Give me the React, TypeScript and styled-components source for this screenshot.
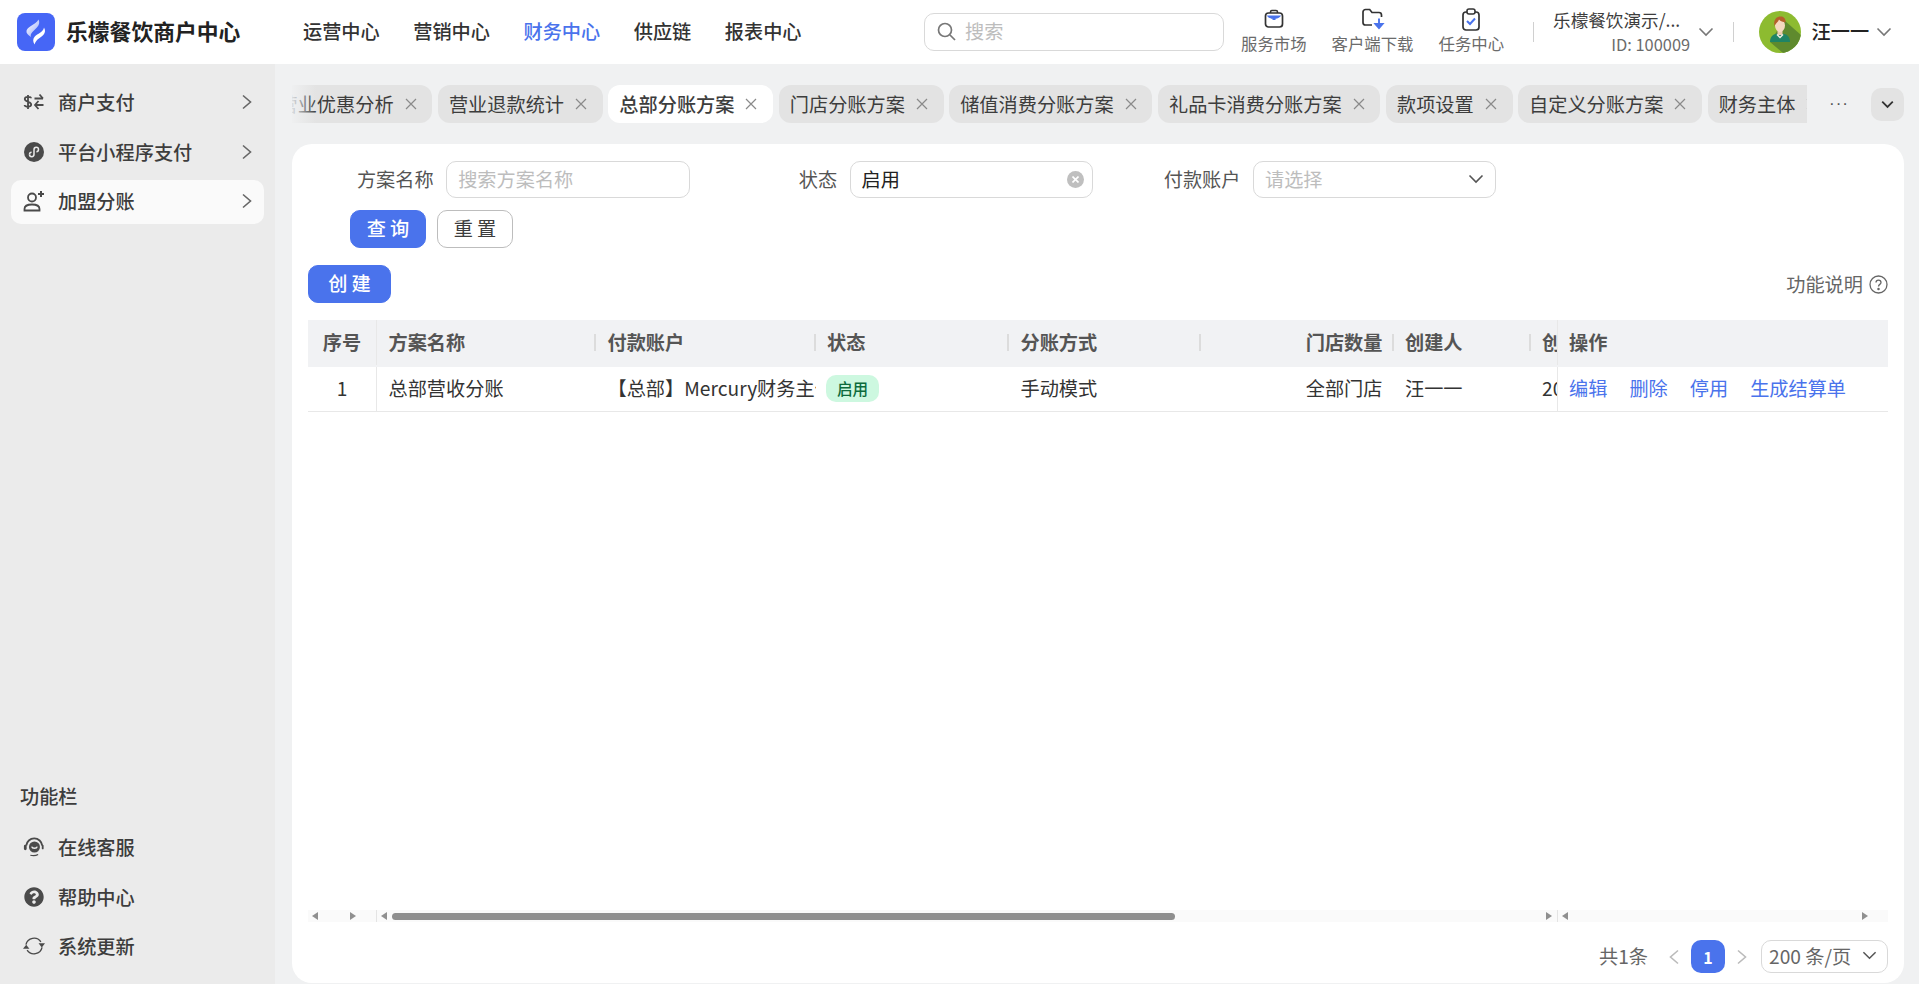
import styled, { createGlobalStyle } from 'styled-components';
import { FaQuestionCircle } from 'react-icons/fa';

const GlobalStyle = createGlobalStyle`
  html, body {
    margin: 0;
    padding: 0;
    height: 100%;
    overflow: hidden;
    background: #f0f1f2;
    font-family: "Noto Sans CJK SC", "Noto Sans", sans-serif;
    color: #3d3d3d;
  }
  * { box-sizing: border-box; }
`;

const Page = styled.div`
  width: 1919px;
  height: 984px;
  display: flex;
  flex-direction: column;
  overflow: hidden;
`;

/* header */
const Header = styled.header`
  height: 64px;
  flex: none;
  background: #fff;
  display: flex;
  align-items: center;
  padding-left: 17px;
`;

const Brand = styled.div`
  width: 286px;
  display: flex;
  align-items: center;
  gap: 11px;
`;

const BrandName = styled.span`
  font-size: 21.8px;
  font-weight: 700;
  color: #222;
  white-space: nowrap;
  padding-bottom: 3px;
`;

const Nav = styled.nav`
  display: flex;
  gap: 33.5px;
  width: 621px;
  padding-bottom: 3px;
`;

const NavItem = styled.span<{ $active?: boolean }>`
  font-size: 19.2px;
  font-weight: 500;
  white-space: nowrap;
  color: ${(p) => (p.$active ? '#4a73ec' : '#333')};
`;

const SearchBox = styled.div`
  width: 300px;
  height: 38px;
  border: 1px solid #d9d9d9;
  border-radius: 10px;
  display: flex;
  align-items: center;
  gap: 9px;
  padding: 0 0 2px 12px;
  font-size: 19.2px;
  color: #bdbdbd;
`;

const Shortcuts = styled.div`
  display: flex;
  margin-left: 17px;
  gap: 25px;
  margin-bottom: 3px;
`;

const Shortcut = styled.div`
  display: flex;
  flex-direction: column;
  align-items: center;
  font-size: 16.4px;
  line-height: 22px;
  color: #6b6b6b;
  white-space: nowrap;
  gap: 1px;
`;

const ShortcutIcon = styled.span`
  height: 23px;
  display: flex;
  align-items: center;
  justify-content: center;
`;

const HeaderDivider = styled.i<{ $gap: number }>`
  width: 1px;
  height: 20px;
  margin-left: ${(p) => p.$gap}px;
  background: #d0d0d0;
  flex: none;
`;

const Company = styled.div`
  margin-left: 19px;
  width: 137px;
  display: flex;
  flex-direction: column;
  align-items: flex-start;
  color: #3d3d3d;
  white-space: nowrap;
`;

const CompanyName = styled.span`
  font-size: 17.6px;
  line-height: 24px;
`;

const CompanyId = styled.span`
  align-self: flex-end;
  font-size: 16.4px;
  line-height: 24px;
  color: #6b6b6b;
`;

const CompanyChevron = styled.span`
  display: flex;
  margin-left: 7.5px;
`;

const AvatarSlot = styled.span`
  display: flex;
  margin-left: 25px;
`;

const UserName = styled.span`
  font-size: 19.2px;
  font-weight: 500;
  color: #222;
  margin-left: 11px;
  width: 58px;
  white-space: nowrap;
  padding-bottom: 3px;
`;

const UserChevron = styled.span`
  display: flex;
  margin-left: 6px;
`;

/* body */
const Body = styled.div`
  flex: 1;
  display: flex;
  min-height: 0;
`;

const Sidebar = styled.aside`
  width: 275px;
  flex: none;
  background: #ebebeb;
  display: flex;
  flex-direction: column;
  justify-content: space-between;
  padding: 17px 11px 15px;
`;

const MenuGroup = styled.div`
  display: flex;
  flex-direction: column;
  gap: 5.5px;
`;

const MenuItem = styled.div<{ $active?: boolean }>`
  height: 44px;
  display: flex;
  align-items: center;
  gap: 13px;
  padding: 0 9.5px 2px 12px;
  border-radius: 10px;
  font-size: 19.2px;
  font-weight: 500;
  color: #3d3d3d;
  background: ${(p) => (p.$active ? '#fafafa' : 'transparent')};
`;

const MenuLabel = styled.span`
  flex: 1;
  white-space: nowrap;
`;

const SectionTitle = styled.div`
  font-size: 19.2px;
  font-weight: 500;
  padding-left: 9px;
  margin-bottom: 16px;
  color: #3d3d3d;
`;

const IconSlot = styled.span`
  width: 22px;
  height: 22px;
  flex: none;
  display: flex;
  align-items: center;
  justify-content: center;
`;

const Main = styled.main`
  flex: 1;
  min-width: 0;
  display: flex;
  flex-direction: column;
  padding: 21px 15px 1px 17px;
`;

/* tabs */
const TabBar = styled.div`
  height: 38px;
  flex: none;
  display: flex;
  align-items: center;
  margin-bottom: 21px;
`;

const TabViewport = styled.div`
  position: relative;
  flex: 1;
  min-width: 0;
  overflow: hidden;
  height: 38px;

  &::before {
    content: '';
    position: absolute;
    left: 0;
    top: 0;
    bottom: 0;
    width: 24px;
    background: linear-gradient(to right, rgba(240, 241, 242, 0.9), rgba(240, 241, 242, 0));
  }
`;

const TabStrip = styled.div`
  display: flex;
  gap: 5.5px;
  margin-left: -24.5px;
  width: max-content;
`;

const Tab = styled.div<{ $active?: boolean }>`
  height: 38px;
  display: flex;
  align-items: center;
  gap: 11px;
  padding: 0 15.8px 1px 11px;
  border-radius: 12px;
  font-size: 19.2px;
  white-space: nowrap;
  color: #3d3d3d;
  background: ${(p) => (p.$active ? '#fff' : '#e3e3e3')};
  font-weight: ${(p) => (p.$active ? 500 : 400)};
`;

const TabTools = styled.div`
  width: 97px;
  flex: none;
  display: flex;
  align-items: center;
  justify-content: space-between;
  padding-left: 22px;
`;

const More = styled.span`
  font-size: 17px;
  line-height: 1;
  letter-spacing: 1px;
  color: #555;
  font-family: "Liberation Sans", sans-serif;
  transform: translateY(-1px);
`;

const RoundButton = styled.span`
  width: 33px;
  height: 33px;
  border-radius: 10px;
  background: #e3e3e3;
  display: flex;
  align-items: center;
  justify-content: center;
`;

/* card */
const Card = styled.section`
  flex: 1;
  min-height: 0;
  background: #fff;
  border-radius: 20px;
  padding: 17px 16px 10px;
  display: flex;
  flex-direction: column;
`;

const Filters = styled.div`
  display: grid;
  grid-template-columns: repeat(3, 403.4px);
  height: 37px;
`;

const Field = styled.div`
  display: grid;
  grid-template-columns: 125.7px 243.5px;
  column-gap: 12.5px;
  align-items: center;
`;

const FieldLabel = styled.label`
  font-size: 19.2px;
  text-align: right;
  color: #555;
  white-space: nowrap;
  padding-bottom: 2px;
`;

const InputBox = styled.div<{ $filled?: boolean }>`
  height: 37px;
  border: 1px solid #d9d9d9;
  border-radius: 10px;
  display: flex;
  align-items: center;
  justify-content: space-between;
  padding: 0 11px 2px;
  font-size: 19.2px;
  color: ${(p) => (p.$filled ? '#222' : '#bdbdbd')};
`;

const ClearDot = styled.span`
  width: 17px;
  height: 17px;
  border-radius: 50%;
  background: #bfbfbf;
  color: #fff;
  display: flex;
  align-items: center;
  justify-content: center;
  margin: 2px -3px 0 0;
`;

const FilterActions = styled.div`
  display: flex;
  gap: 11px;
  margin: 12px 0 0 42px;
`;

const Button = styled.button<{ $primary?: boolean; $wide?: boolean }>`
  height: 38px;
  width: ${(p) => (p.$wide ? '83px' : '76px')};
  border-radius: 10px;
  border: 1px solid ${(p) => (p.$primary ? '#4a73ec' : '#bdbdbd')};
  background: ${(p) => (p.$primary ? '#4a73ec' : '#fff')};
  color: ${(p) => (p.$primary ? '#fff' : '#3d3d3d')};
  font-family: inherit;
  font-size: 19.2px;
  font-weight: ${(p) => (p.$primary ? 500 : 400)};
  letter-spacing: 4px;
  text-indent: 4px;
  padding: 0 0 2px;
`;

const TableTop = styled.div`
  display: flex;
  align-items: center;
  justify-content: space-between;
  margin-top: 17px;
`;

const HelpLink = styled.span`
  display: flex;
  align-items: center;
  gap: 6px;
  font-size: 19.2px;
  color: #666;
`;

/* table */
const Table = styled.div`
  margin-top: 17px;
  flex: 1;
  min-height: 0;
  display: flex;
  flex-direction: column;
`;

const Row = styled.div<{ $head?: boolean }>`
  display: grid;
  grid-template-columns: 69px 219px 219.5px 193.5px 192px 192.5px 137px 27px 329px;
  height: ${(p) => (p.$head ? '47px' : '45px')};
  padding-bottom: ${(p) => (p.$head ? '2px' : '0')};
  background: ${(p) => (p.$head ? '#f1f2f4' : '#fff')};
  border-bottom: ${(p) => (p.$head ? 'none' : '1px solid #e8e8e8')};
  font-size: 19.2px;
  font-weight: ${(p) => (p.$head ? 600 : 400)};
  color: ${(p) => (p.$head ? '#555' : '#333')};
`;

const Cell = styled.div<{ $align?: string; $sep?: boolean; $edge?: boolean }>`
  position: relative;
  display: flex;
  align-items: center;
  justify-content: ${(p) => p.$align || 'flex-start'};
  padding: ${(p) => (p.$align === 'flex-end' ? '0 11px 2px 0' : p.$align === 'center' ? '0 0 2px' : '0 0 2px 11.5px')};
  white-space: nowrap;
  overflow: hidden;
  border-right: ${(p) => (p.$edge ? '1px solid #e8e8e8' : 'none')};

  &::after {
    content: '';
    display: ${(p) => (p.$sep ? 'block' : 'none')};
    position: absolute;
    right: 0;
    top: 14px;
    bottom: 14px;
    width: 2px;
    background: #dcdcdc;
  }
`;

const Status = styled.span`
  height: 27px;
  width: 53px;
  flex: none;
  margin-left: -1px;
  border-radius: 10px;
  background: #cdf8e0;
  color: #0b6b3c;
  font-size: 15.6px;
  font-weight: 500;
  display: flex;
  align-items: center;
  justify-content: center;
`;

const Actions = styled.div`
  display: flex;
  gap: 22px;
  color: #4a73ec;
`;

const Spacer = styled.div`
  flex: 1;
`;

const ScrollRow = styled.div`
  display: grid;
  grid-template-columns: 68px 1px 1180px 1px 1fr;
  height: 12px;
  align-items: stretch;
`;

const ScrollPart = styled.div<{ $middle?: boolean }>`
  background: #fafafa;
  display: flex;
  align-items: center;
  justify-content: space-between;
  padding: ${(p) => (p.$middle ? '0 5px 0 4px' : '0 20px 0 4px')};
  gap: 5px;
`;

const ScrollEdge = styled.div`
  background: #e4e4e4;
`;

const Thumb = styled.div`
  width: 783px;
  height: 7px;
  background: #8f8f8f;
  border-radius: 4px;
  margin-right: auto;
`;

const Arrow = styled.i<{ $right?: boolean }>`
  width: 0;
  height: 0;
  flex: none;
  border-top: 4px solid transparent;
  border-bottom: 4px solid transparent;
  border-${(p) => (p.$right ? 'left' : 'right')}: 6px solid #8f8f8f;
`;

const Pager = styled.div`
  margin-top: 18px;
  display: flex;
  align-items: center;
  justify-content: flex-end;
  height: 33px;
  font-size: 19.2px;
  color: #666;
`;

const PagerTotal = styled.span`
  margin-right: 18px;
  padding-bottom: 2px;
`;

const PageNum = styled.span`
  width: 34px;
  height: 33px;
  margin: 0 9px;
  border-radius: 10px;
  background: #4a73ec;
  color: #fff;
  font-size: 16px;
  font-weight: 600;
  display: flex;
  align-items: center;
  justify-content: center;
`;

const PageSize = styled.div`
  width: 127px;
  height: 33px;
  margin-left: 11px;
  border: 1px solid #d9d9d9;
  border-radius: 10px;
  display: flex;
  align-items: center;
  justify-content: space-between;
  padding: 0 10px 2px 7px;
  white-space: nowrap;
`;

const Chevron = ({ dir = 'down', size = 14, color = '#666', width = 1.6 }: { dir?: 'down' | 'right' | 'left'; size?: number; color?: string; width?: number }) => {
  const d = dir === 'down' ? 'M1.500 4.500L8 11l6.500-6.500' : dir === 'right' ? 'M4 1.500L11.500 8 4 14.500' : 'M12 1.500L4.500 8l7.500 6.500';
  return (
    <svg width={size} height={size} viewBox="0 0 16 16" fill="none" stroke={color} strokeWidth={width} style={{ flex: 'none' }}>
      <path d={d} />
    </svg>
  );
};

const Close = () => (
  <svg width="12" height="12" viewBox="0 0 12 12" stroke="#8a8a8a" strokeWidth="1.2" style={{ flex: 'none', marginTop: 1 }}>
    <path d="M1 1l10 10M11 1L1 11" />
  </svg>
);

const Logo = () => (
  <svg width="38" height="38" viewBox="0 0 38 38" style={{ flex: 'none' }}>
    <defs>
      <linearGradient id="leaf" x1="0" y1="0" x2="1" y2="1">
        <stop offset="0" stopColor="#ffffff" />
        <stop offset="1" stopColor="#ffffff" stopOpacity="0.45" />
      </linearGradient>
    </defs>
    <rect width="38" height="38" rx="8" fill="#4666f6" />
    <path d="M21.500 6.500c1.600 3 .6 5.700-1.600 8l-4.700 4.700c-1.400 1.500-1.800 3-1.200 4.800-2.900-1.800-5-3.900-4.500-6.200.4-1.900 2.200-3.200 4-4.600 3-2.200 6.700-3.700 8-6.700z" fill="url(#leaf)" />
    <path d="M27 14.500c1.500 2.700 1.400 5-.5 7.300-2.400 2.800-7.700 4.500-8.900 9.700-2-3-1.800-5.700.2-8 2.600-3 8.400-4 9.200-9z" fill="#ffffff" />
  </svg>
);

const Avatar = () => (
  <svg width="42" height="42" viewBox="0 0 42 42" style={{ flex: 'none' }}>
    <clipPath id="avatarClip">
      <circle cx="21" cy="21" r="21" />
    </clipPath>
    <g clipPath="url(#avatarClip)">
      <rect width="42" height="42" fill="#8dbb30" />
      <path d="M25 9l17 15v18H24L11 31z" fill="#5f8a2e" />
      <path d="M11 31c0-6 3.500-8.500 10-8.500s10 2.500 10 8.500z" fill="#1f8465" />
      <rect x="18.500" y="19" width="5" height="5" fill="#eccbae" />
      <path d="M18.500 23l2.500 2.500 2.500-2.500 1 1-3.500 3.500-3.500-3.500z" fill="#f1ede4" />
      <ellipse cx="21" cy="14.500" rx="5" ry="6.500" fill="#f5d9c0" />
      <path d="M15.500 15c-1.200-5 1-9.500 6-9.500 3.500 0 5.500 2.500 5 6-2.500-.5-5-1-6.500-3-.8 2.500-3 3.500-4.500 6.500z" fill="#b5602a" />
    </g>
  </svg>
);

const MarketIcon = () => (
  <svg width="20" height="20" viewBox="0 0 20 20" fill="none">
    <path d="M6.500 4V3a1.500 1.500 0 0 1 1.500-1.500h4A1.500 1.500 0 0 1 13.500 3v1" stroke="#333" strokeWidth="1.600" />
    <rect x="1.500" y="4" width="17" height="14" rx="3" stroke="#333" strokeWidth="1.700" />
    <path d="M3 6.500h14c-.5 2-3.500 3-5.500 3.300V11h-3V9.800C6.500 9.500 3.500 8.500 3 6.500z" fill="#4a73ec" />
  </svg>
);

const DownloadIcon = () => (
  <svg width="24" height="22" viewBox="0 0 24 22" fill="none">
    <path d="M11 17H4.500A2.500 2.500 0 0 1 2 14.500V4A2.500 2.500 0 0 1 4.500 1.500h4.200l2.300 3h7A2.500 2.500 0 0 1 20.500 7v2" stroke="#333" strokeWidth="1.700" />
    <path d="M18 10.500V19M14.500 16l3.500 4 3.500-4z" stroke="#4a73ec" strokeWidth="1.900" fill="#4a73ec" />
  </svg>
);

const TaskIcon = () => (
  <svg width="20" height="23" viewBox="0 0 20 23" fill="none">
    <rect x="2" y="4" width="16" height="18" rx="3" stroke="#333" strokeWidth="1.700" />
    <rect x="6" y="1" width="8" height="5" rx="2" fill="#fff" stroke="#333" strokeWidth="1.600" />
    <path d="M6 13l3 3 5-5.500" stroke="#4a73ec" strokeWidth="2" />
  </svg>
);

const SwapIcon = () => (
  <svg width="22" height="20" viewBox="0 0 22 20" fill="none" stroke="#4a4a4a" strokeWidth="1.800">
    <path d="M8 6.200C8 4.500 1.800 4.200 1.800 7c0 3 6.400 2.400 6.400 5.600 0 3-6.600 2.600-6.600.4M5 3v14" />
    <path d="M11.500 6.500H20M16.500 2.500l3.500 4M20.500 13H12M15.500 9l-3.500 4 3.500 4" />
  </svg>
);

const MiniProgramIcon = () => (
  <svg width="20" height="20" viewBox="0 0 20 20" fill="none">
    <circle cx="10" cy="10" r="10" fill="#4a4a4a" />
    <path d="M5.500 12.500c0 1.300 1 2.200 2.200 2.200s2.300-1 2.300-2.400V7.700c0-1.400 1-2.400 2.300-2.400s2.200.9 2.200 2.200-1 2.200-2.100 2.200" stroke="#ebebeb" strokeWidth="1.500" />
    <path d="M7.600 10.300c-1.100 0-2.100.9-2.100 2.200" stroke="#ebebeb" strokeWidth="1.500" />
  </svg>
);

const UserPlusIcon = () => (
  <svg width="22" height="22" viewBox="0 0 22 22" fill="none" stroke="#4a4a4a" strokeWidth="1.800">
    <circle cx="9" cy="7.500" r="4" />
    <path d="M1.500 20.500v-1.500c0-2.500 2.500-4.500 7.500-4.500s7.500 2 7.500 4.500v1.500z" />
    <path d="M18 1v6M15 4h6" strokeWidth="2" />
  </svg>
);

const ServiceIcon = () => (
  <svg width="24" height="22" viewBox="0 0 24 22" fill="none">
    <path d="M3.500 9.500a8.800 8.800 0 0 1 17.500 0" stroke="#4a4a4a" strokeWidth="2" />
    <circle cx="12.500" cy="11" r="6" fill="#4a4a4a" />
    <path d="M9.500 10.500c.5 2.500 5.500 2.500 6 0" stroke="#ebebeb" strokeWidth="1.500" />
    <rect x="1" y="8.500" width="3" height="6" rx="1.500" fill="#4a4a4a" />
    <rect x="20.500" y="8.500" width="2" height="5" rx="1" fill="#4a4a4a" />
    <path d="M8 20c3 .8 6 .6 8.500-.8" stroke="#4a4a4a" strokeWidth="1.400" />
  </svg>
);

const SyncIcon = () => (
  <svg width="24" height="22" viewBox="0 0 24 22" fill="none" stroke="#4a4a4a" strokeWidth="1.500">
    <path d="M3.200 9.500A9 9 0 0 1 19.500 6.500" />
    <path d="M20.800 12.500A9 9 0 0 1 4.500 15.500" />
    <path d="M17 8h7l-3.500 4.500z" fill="#4a4a4a" stroke="none" />
    <path d="M0 14h7L3.500 9.500z" fill="#4a4a4a" stroke="none" />
  </svg>
);

const SearchIcon = () => (
  <svg width="19" height="19" viewBox="0 0 19 19" fill="none" stroke="#777" strokeWidth="1.700" style={{ flex: 'none' }}>
    <circle cx="8" cy="8" r="6.500" />
    <path d="M13 13l5 5" />
  </svg>
);

const HelpIcon = () => (
  <svg width="19" height="19" viewBox="0 0 19 19" fill="none" stroke="#666" strokeWidth="1.300">
    <circle cx="9.500" cy="9.500" r="8.500" />
    <path d="M7 7.500c0-3.200 5-3.200 5 0 0 2-2.500 1.800-2.500 4" />
    <circle cx="9.500" cy="14" r=".6" fill="#666" />
  </svg>
);

const TABS = ['营业优惠分析', '营业退款统计', '总部分账方案', '门店分账方案', '储值消费分账方案', '礼品卡消费分账方案', '款项设置', '自定义分账方案', '财务主体'];

export default function App() {
  return (
    <Page>
      <GlobalStyle />
      <Header>
        <Brand>
          <Logo />
          <BrandName>乐檬餐饮商户中心</BrandName>
        </Brand>
        <Nav>
          <NavItem>运营中心</NavItem>
          <NavItem>营销中心</NavItem>
          <NavItem $active>财务中心</NavItem>
          <NavItem>供应链</NavItem>
          <NavItem>报表中心</NavItem>
        </Nav>
        <SearchBox>
          <SearchIcon />
          搜索
        </SearchBox>
        <Shortcuts>
          <Shortcut>
            <ShortcutIcon><MarketIcon /></ShortcutIcon>
            服务市场
          </Shortcut>
          <Shortcut>
            <ShortcutIcon><DownloadIcon /></ShortcutIcon>
            客户端下载
          </Shortcut>
          <Shortcut>
            <ShortcutIcon><TaskIcon /></ShortcutIcon>
            任务中心
          </Shortcut>
        </Shortcuts>
        <HeaderDivider $gap={29} />
        <Company>
          <CompanyName>乐檬餐饮演示/...</CompanyName>
          <CompanyId>ID: 100009</CompanyId>
        </Company>
        <CompanyChevron>
          <Chevron size={16} color="#777" />
        </CompanyChevron>
        <HeaderDivider $gap={19} />
        <AvatarSlot>
          <Avatar />
        </AvatarSlot>
        <UserName>汪一一</UserName>
        <UserChevron>
          <Chevron size={16} color="#777" />
        </UserChevron>
      </Header>
      <Body>
        <Sidebar>
          <MenuGroup>
            <MenuItem>
              <IconSlot><SwapIcon /></IconSlot>
              <MenuLabel>商户支付</MenuLabel>
              <Chevron dir="right" size={16} />
            </MenuItem>
            <MenuItem>
              <IconSlot><MiniProgramIcon /></IconSlot>
              <MenuLabel>平台小程序支付</MenuLabel>
              <Chevron dir="right" size={16} />
            </MenuItem>
            <MenuItem $active>
              <IconSlot><UserPlusIcon /></IconSlot>
              <MenuLabel>加盟分账</MenuLabel>
              <Chevron dir="right" size={16} />
            </MenuItem>
          </MenuGroup>
          <div>
            <SectionTitle>功能栏</SectionTitle>
            <MenuGroup>
              <MenuItem>
                <IconSlot><ServiceIcon /></IconSlot>
                <MenuLabel>在线客服</MenuLabel>
              </MenuItem>
              <MenuItem>
                <IconSlot><FaQuestionCircle size={20} color="#4a4a4a" /></IconSlot>
                <MenuLabel>帮助中心</MenuLabel>
              </MenuItem>
              <MenuItem>
                <IconSlot><SyncIcon /></IconSlot>
                <MenuLabel>系统更新</MenuLabel>
              </MenuItem>
            </MenuGroup>
          </div>
        </Sidebar>
        <Main>
          <TabBar>
            <TabViewport>
              <TabStrip>
                {TABS.map((t) => (
                  <Tab key={t} $active={t === '总部分账方案'}>
                    {t}
                    <Close />
                  </Tab>
                ))}
              </TabStrip>
            </TabViewport>
            <TabTools>
              <More>···</More>
              <RoundButton>
                <Chevron size={13} color="#333" width={2.2} />
              </RoundButton>
            </TabTools>
          </TabBar>
          <Card>
            <Filters>
              <Field>
                <FieldLabel>方案名称</FieldLabel>
                <InputBox>搜索方案名称</InputBox>
              </Field>
              <Field>
                <FieldLabel>状态</FieldLabel>
                <InputBox $filled>
                  启用
                  <ClearDot>
                    <svg width="7" height="7" viewBox="0 0 7 7" stroke="#fff" strokeWidth="1.600"><path d="M.5.5l6 6M6.500.5l-6 6" /></svg>
                  </ClearDot>
                </InputBox>
              </Field>
              <Field>
                <FieldLabel>付款账户</FieldLabel>
                <InputBox>
                  请选择
                  <Chevron size={16} color="#555" />
                </InputBox>
              </Field>
            </Filters>
            <FilterActions>
              <Button $primary>查询</Button>
              <Button>重置</Button>
            </FilterActions>
            <TableTop>
              <Button $primary $wide>创建</Button>
              <HelpLink>功能说明<HelpIcon /></HelpLink>
            </TableTop>
            <Table>
              <Row $head>
                <Cell $align="center" $edge>序号</Cell>
                <Cell $sep>方案名称</Cell>
                <Cell $sep>付款账户</Cell>
                <Cell $sep>状态</Cell>
                <Cell $sep>分账方式</Cell>
                <Cell $align="flex-end" $sep>门店数量</Cell>
                <Cell $sep>创建人</Cell>
                <Cell $edge>创建时间</Cell>
                <Cell>操作</Cell>
              </Row>
              <Row>
                <Cell $align="center" $edge>1</Cell>
                <Cell>总部营收分账</Cell>
                <Cell>【总部】Mercury财务主体</Cell>
                <Cell><Status>启用</Status></Cell>
                <Cell>手动模式</Cell>
                <Cell $align="flex-end">全部门店</Cell>
                <Cell>汪一一</Cell>
                <Cell $edge>2024-01-01</Cell>
                <Cell>
                  <Actions>
                    <span>编辑</span>
                    <span>删除</span>
                    <span>停用</span>
                    <span>生成结算单</span>
                  </Actions>
                </Cell>
              </Row>
              <Spacer />
              <ScrollRow>
                <ScrollPart>
                  <Arrow />
                  <Arrow $right />
                </ScrollPart>
                <ScrollEdge />
                <ScrollPart $middle>
                  <Arrow />
                  <Thumb />
                  <Arrow $right />
                </ScrollPart>
                <ScrollEdge />
                <ScrollPart>
                  <Arrow />
                  <Arrow $right />
                </ScrollPart>
              </ScrollRow>
            </Table>
            <Pager>
              <PagerTotal>共1条</PagerTotal>
              <Chevron dir="left" size={16} color="#bbb" />
              <PageNum>1</PageNum>
              <Chevron dir="right" size={16} color="#bbb" />
              <PageSize>
                200 条/页
                <Chevron size={15} color="#555" />
              </PageSize>
            </Pager>
          </Card>
        </Main>
      </Body>
    </Page>
  );
}
